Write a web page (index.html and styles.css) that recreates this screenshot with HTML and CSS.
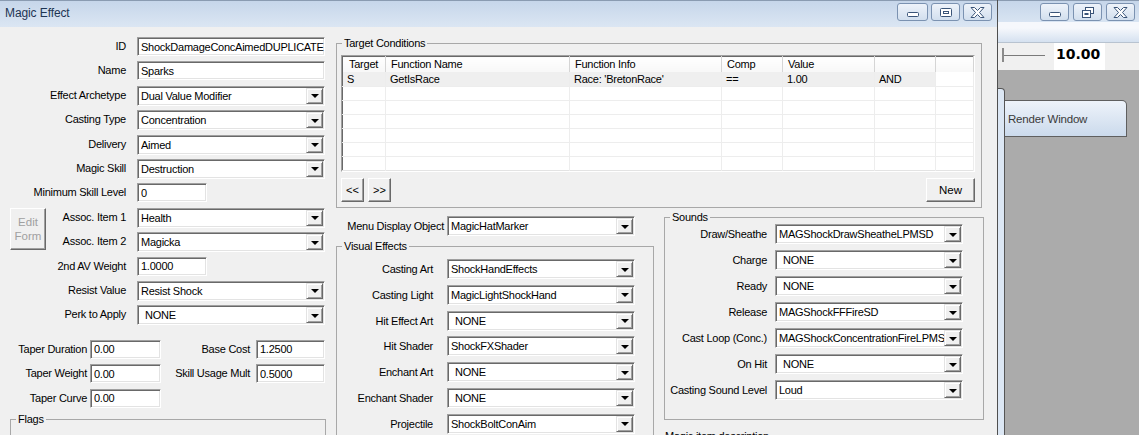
FILE: index.html
```html
<!DOCTYPE html>
<html lang="en">
<head>
<meta charset="UTF-8">
<title>Magic Effect</title>
<link rel="stylesheet" href="styles.css">
</head>
<body>
<div class="desktop">

<div class="dialog">
    <div class="titlebar">
        <span class="title">Magic Effect</span>
        <div class="caption-buttons">
            <span class="cap-btn wide glyph-low"><svg width="12" height="5" viewBox="0 0 12 5"><rect x="0.5" y="0.5" width="11" height="4" rx="1" fill="#fff" stroke="#3a5478"/></svg></span>
            <span class="cap-btn"><svg width="12" height="9" viewBox="0 0 12 9"><rect x="0.5" y="0.5" width="11" height="8" rx="1" fill="#fff" stroke="#3a5478"/><rect x="3.5" y="3.5" width="5" height="2" fill="#fff" stroke="#3a5478"/></svg></span>
            <span class="cap-btn"><svg width="15" height="11" viewBox="0 0 15 11"><polygon points="1,0.5 4.5,0.5 7.5,3.5 10.5,0.5 14,0.5 9.5,5.5 14,10.5 10.5,10.5 7.5,7.5 4.5,10.5 1,10.5 5.5,5.5" fill="#fff" stroke="#3a5478" stroke-linejoin="round"/></svg></span>
        </div>
    </div>

    <div class="dialog-body">
        <div class="left-col">
            <div class="form-grid">
                <span class="lbl">ID</span>
                <input class="edit wide" type="text" value="ShockDamageConcAimedDUPLICATE">
                <span class="lbl">Name</span>
                <input class="edit wide" type="text" value="Sparks">
                <span class="lbl">Effect Archetype</span>
                <div class="combo"><span class="combo-text">Dual Value Modifier</span><span class="combo-btn"></span></div>
                <span class="lbl">Casting Type</span>
                <div class="combo"><span class="combo-text">Concentration</span><span class="combo-btn"></span></div>
                <span class="lbl">Delivery</span>
                <div class="combo"><span class="combo-text">Aimed</span><span class="combo-btn"></span></div>
                <span class="lbl">Magic Skill</span>
                <div class="combo"><span class="combo-text">Destruction</span><span class="combo-btn"></span></div>
                <span class="lbl">Minimum Skill Level</span>
                <input class="edit short" type="text" value="0">
                <button class="edit-form" disabled>Edit<br>Form</button>
                <span class="lbl narrow">Assoc. Item 1</span>
                <div class="combo"><span class="combo-text">Health</span><span class="combo-btn"></span></div>
                <span class="lbl narrow">Assoc. Item 2</span>
                <div class="combo"><span class="combo-text">Magicka</span><span class="combo-btn"></span></div>
                <span class="lbl">2nd AV Weight</span>
                <input class="edit short" type="text" value="1.0000">
                <span class="lbl">Resist Value</span>
                <div class="combo"><span class="combo-text">Resist Shock</span><span class="combo-btn"></span></div>
                <span class="lbl">Perk to Apply</span>
                <div class="combo"><span class="combo-text none">NONE</span><span class="combo-btn"></span></div>
            </div>

            <div class="taper-grid">
                <span class="lbl-a">Taper Duration</span>
                <input class="edit" type="text" value="0.00">
                <span class="lbl-b">Base Cost</span>
                <input class="edit" type="text" value="1.2500">
                <span class="lbl-a">Taper Weight</span>
                <input class="edit" type="text" value="0.00">
                <span class="lbl-b">Skill Usage Mult</span>
                <input class="edit" type="text" value="0.5000">
                <span class="lbl-a">Taper Curve</span>
                <input class="edit" type="text" value="0.00">
            </div>

            <fieldset class="group flags">
                <legend>Flags</legend>
            </fieldset>
        </div>

        <div class="right-col">
            <fieldset class="group target">
                <legend>Target Conditions</legend>
                <div class="target-inner">
                    <div class="listview">
                        <table>
                            <colgroup>
                                <col style="width:43px"><col style="width:184px"><col style="width:152px"><col style="width:61px"><col style="width:92px"><col style="width:61px"><col>
                            </colgroup>
                            <tr><th class="first">Target</th><th>Function Name</th><th>Function Info</th><th>Comp</th><th>Value</th><th></th><th></th></tr>
                            <tr class="sel"><td>S</td><td>GetIsRace</td><td>Race: 'BretonRace'</td><td>==</td><td>1.00</td><td>AND</td><td class="blank"></td></tr>
                            <tr><td></td><td></td><td></td><td></td><td></td><td></td><td></td></tr>
                            <tr><td></td><td></td><td></td><td></td><td></td><td></td><td></td></tr>
                            <tr><td></td><td></td><td></td><td></td><td></td><td></td><td></td></tr>
                            <tr><td></td><td></td><td></td><td></td><td></td><td></td><td></td></tr>
                            <tr><td></td><td></td><td></td><td></td><td></td><td></td><td></td></tr>
                            <tr class="last"><td></td><td></td><td></td><td></td><td></td><td></td><td></td></tr>
                        </table>
                    </div>
                    <div class="list-buttons">
                        <div class="nav-buttons">
                            <button class="button small">&lt;&lt;</button>
                            <button class="button small">&gt;&gt;</button>
                        </div>
                        <button class="button new">New</button>
                    </div>
                </div>
            </fieldset>

            <div class="lower">
                <div class="lower-left">
                    <div class="menu-row">
                        <span class="lbl-menu">Menu Display Object</span>
                        <div class="combo"><span class="combo-text">MagicHatMarker</span><span class="combo-btn"></span></div>
                    </div>
                    <fieldset class="group visual">
                        <legend>Visual Effects</legend>
                        <div class="visual-grid">
                            <span class="lbl-v">Casting Art</span>
                            <div class="combo"><span class="combo-text">ShockHandEffects</span><span class="combo-btn"></span></div>
                            <span class="lbl-v">Casting Light</span>
                            <div class="combo"><span class="combo-text">MagicLightShockHand</span><span class="combo-btn"></span></div>
                            <span class="lbl-v">Hit Effect Art</span>
                            <div class="combo"><span class="combo-text none">NONE</span><span class="combo-btn"></span></div>
                            <span class="lbl-v">Hit Shader</span>
                            <div class="combo"><span class="combo-text">ShockFXShader</span><span class="combo-btn"></span></div>
                            <span class="lbl-v">Enchant Art</span>
                            <div class="combo"><span class="combo-text none">NONE</span><span class="combo-btn"></span></div>
                            <span class="lbl-v">Enchant Shader</span>
                            <div class="combo"><span class="combo-text none">NONE</span><span class="combo-btn"></span></div>
                            <span class="lbl-v">Projectile</span>
                            <div class="combo"><span class="combo-text">ShockBoltConAim</span><span class="combo-btn"></span></div>
                        </div>
                    </fieldset>
                </div>

                <div class="lower-right">
                    <fieldset class="group sounds">
                        <legend>Sounds</legend>
                        <div class="sounds-grid">
                            <span class="lbl-s">Draw/Sheathe</span>
                            <div class="combo"><span class="combo-text">MAGShockDrawSheatheLPMSD</span><span class="combo-btn"></span></div>
                            <span class="lbl-s">Charge</span>
                            <div class="combo"><span class="combo-text none">NONE</span><span class="combo-btn"></span></div>
                            <span class="lbl-s">Ready</span>
                            <div class="combo"><span class="combo-text none">NONE</span><span class="combo-btn"></span></div>
                            <span class="lbl-s">Release</span>
                            <div class="combo"><span class="combo-text">MAGShockFFFireSD</span><span class="combo-btn"></span></div>
                            <span class="lbl-s">Cast Loop (Conc.)</span>
                            <div class="combo"><span class="combo-text">MAGShockConcentrationFireLPMSD</span><span class="combo-btn"></span></div>
                            <span class="lbl-s">On Hit</span>
                            <div class="combo"><span class="combo-text none">NONE</span><span class="combo-btn"></span></div>
                            <span class="lbl-s">Casting Sound Level</span>
                            <div class="combo"><span class="combo-text">Loud</span><span class="combo-btn"></span></div>
                        </div>
                    </fieldset>
                    <div class="description">Magic item description</div>
                </div>
            </div>
        </div>
    </div>
</div>

<div class="bg-window">
    <div class="bg-titlebar">
        <span class="cap-btn glyph-low"><svg width="12" height="5" viewBox="0 0 12 5"><rect x="0.5" y="0.5" width="11" height="4" rx="1" fill="#fff" stroke="#3a5478"/></svg></span>
        <span class="cap-btn"><svg width="12" height="11" viewBox="0 0 12 11"><rect x="3.5" y="0.5" width="8" height="6" fill="#fff" stroke="#3a5478"/><rect x="0.5" y="3.5" width="8" height="7" fill="#fff" stroke="#3a5478"/><rect x="2.5" y="6" width="4" height="2" fill="#3a5478"/></svg></span>
        <span class="cap-btn"><svg width="15" height="11" viewBox="0 0 15 11"><polygon points="1,0.5 4.5,0.5 7.5,3.5 10.5,0.5 14,0.5 9.5,5.5 14,10.5 10.5,10.5 7.5,7.5 4.5,10.5 1,10.5 5.5,5.5" fill="#fff" stroke="#3a5478" stroke-linejoin="round"/></svg></span>
    </div>
    <div class="bg-toolbar"></div>
    <div class="bg-slider-row">
        <div class="slider"></div>
        <div class="slider-value">10.00</div>
    </div>
    <div class="bg-area">
        <div class="tab-strip"></div>
        <div class="render-tab">Render Window</div>
    </div>
</div>

</div>
</body>
</html>
```

FILE: styles.css
```css
* {
    box-sizing: border-box;
}
body {
    margin: 0;
    width: 1139px;
    height: 435px;
    overflow: hidden;
    font-family: "Liberation Sans", Arial, sans-serif;
    font-size: 11px;
    letter-spacing: -0.25px;
    color: #000;
    background: #ababab;
}
.desktop {
    display: flex;
    height: 435px;
}

/* dialog window */
.dialog {
    width: 998px;
    flex: none;
    display: flex;
    flex-direction: column;
    background: #f0f0f0;
    border-right: 1px solid #4f4f4f;
}
.titlebar {
    height: 27px;
    flex: none;
    display: flex;
    justify-content: space-between;
    padding: 0 5px;
    background: linear-gradient(#c6d6ea, #dbe6f3);
    border-top: 1px solid #8a9bb1;
}
.title {
    line-height: 25px;
    font-size: 12px;
    letter-spacing: -0.1px;
    color: #1e3553;
}
.caption-buttons {
    display: flex;
    gap: 3px;
    padding-top: 2px;
}
.cap-btn {
    width: 29px;
    height: 18px;
    display: flex;
    align-items: center;
    justify-content: center;
    border: 1px solid #7b92b1;
    border-radius: 3px;
    background: linear-gradient(#eef3fa, #d2dfee);
}
.cap-btn.wide {
    width: 31px;
}
.cap-btn.glyph-low {
    align-items: flex-end;
    padding-bottom: 3px;
}
.dialog-body {
    flex: 1;
    min-height: 0;
    display: flex;
    overflow: hidden;
}

/* left column */
.left-col {
    width: 336px;
    flex: none;
    padding: 10px 0 0 10px;
}
.form-grid {
    display: grid;
    grid-template-columns: 36px 91px 188px;
    grid-auto-rows: 24.4px;
    align-items: start;
}
.lbl {
    grid-column: 1 / 3;
    text-align: right;
    padding-right: 11px;
    line-height: 19px;
    white-space: nowrap;
}
.lbl.narrow {
    grid-column: 2;
}
.form-grid .edit, .form-grid .combo {
    grid-column: 3;
}
.edit-form {
    grid-column: 1;
    grid-row: 8 / 10;
    height: 42px;
    padding: 0;
    font: inherit;
    font-size: 11.5px;
    line-height: 14px;
    color: #a0a0a0;
    background: #f0f0f0;
    border: 1px solid;
    border-color: #fff #696969 #696969 #fff;
    box-shadow: inset -1px -1px 0 #a0a0a0;
}
.taper-grid {
    display: grid;
    grid-template-columns: 80px 71px 95px 69px;
    grid-auto-rows: 24.5px;
    align-items: start;
    margin-top: 10px;
}
.lbl-a, .lbl-b {
    text-align: right;
    line-height: 19px;
    white-space: nowrap;
    padding-right: 3px;
}
.lbl-b {
    padding-right: 6px;
}
.flags {
    width: 316px;
    height: 60px;
    margin-top: 4px;
}

/* edit boxes and combo boxes */
.edit {
    height: 19px;
    width: 100%;
    padding: 0 0 0 3px;
    font: inherit;
    letter-spacing: inherit;
    color: #000;
    background: #fff;
    border: 1px solid;
    border-color: #a0a0a0 #fff #fff #a0a0a0;
    box-shadow: inset 1px 1px 0 #696969, inset -1px -1px 0 #e3e3e3;
    outline: none;
}
.edit.short {
    width: 70px;
}
.combo {
    width: 188px;
    height: 20px;
    display: flex;
    align-items: center;
    padding: 1px 1px 1px 3px;
    background: #fff;
    border: 1px solid;
    border-color: #a0a0a0 #fff #fff #a0a0a0;
    box-shadow: inset 1px 1px 0 #696969, inset -1px -1px 0 #e3e3e3;
}
.combo-text {
    flex: 1;
    overflow: hidden;
    white-space: nowrap;
}
.combo-text.none {
    padding-left: 4px;
}
.combo-btn {
    width: 17px;
    height: 16px;
    flex: none;
    display: flex;
    align-items: center;
    justify-content: center;
    background: #f0f0f0;
    border: 1px solid;
    border-color: #e3e3e3 #696969 #696969 #e3e3e3;
    box-shadow: inset 1px 1px 0 #fff, inset -1px -1px 0 #a0a0a0;
}
.combo-btn::after {
    content: "";
    width: 0;
    height: 0;
    border-left: 4px solid transparent;
    border-right: 4px solid transparent;
    border-top: 4px solid #000;
    margin-top: 1px;
}

/* group boxes */
.group {
    margin: 0;
    padding: 0;
    min-width: 0;
    border: 1px solid #a8a8a8;
}
.group legend {
    margin-left: 5px;
    padding: 0 2px;
    line-height: 13px;
}

/* right part */
.right-col {
    width: 650px;
    flex: none;
}
.target {
    width: 646px;
    margin-top: 10px;
}
.target-inner {
    padding: 5px 6px 5px 4px;
}
.listview {
    border: 1px solid;
    border-color: #a0a0a0 #fff #fff #a0a0a0;
    background: #fff;
}
.listview table {
    width: 632px;
    table-layout: fixed;
    border-collapse: collapse;
    border: 1px solid;
    border-color: #696969 #e3e3e3 #e3e3e3 #696969;
}
.listview th {
    height: 15px;
    padding: 0 0 0 5px;
    font-weight: normal;
    text-align: left;
    white-space: nowrap;
    background: linear-gradient(#fff, #f7f7f7);
    border-right: 1px solid #d5d5d5;
}
.listview th.first {
    padding-left: 6px;
}
.listview td {
    height: 14px;
    padding: 0 0 0 4px;
    white-space: nowrap;
    overflow: hidden;
    border-right: 1px solid #ededed;
    border-bottom: 1px solid #ededed;
}
.listview tr.sel td {
    height: 15px;
    background: #efefef;
}
.listview tr.sel td.blank {
    background: #fff;
}
.listview tr.last td {
    border-bottom: none;
}
.list-buttons {
    display: flex;
    justify-content: space-between;
    margin-top: 6px;
}
.nav-buttons {
    display: flex;
    gap: 4px;
}
.button {
    height: 24px;
    padding: 0;
    font: inherit;
    color: #000;
    background: #f0f0f0;
    border: 1px solid;
    border-color: #fff #696969 #696969 #fff;
    box-shadow: inset -1px -1px 0 #a0a0a0;
}
.button.small {
    width: 23px;
}
.button.new {
    width: 49px;
    font-size: 11.5px;
}
.lower {
    display: flex;
    gap: 10px;
    align-items: flex-start;
}
.lower-left {
    width: 318px;
    flex: none;
    padding-top: 8px;
}
.menu-row {
    display: grid;
    grid-template-columns: 111px 188px;
    align-items: center;
}
.lbl-menu {
    text-align: right;
    padding-right: 3px;
    white-space: nowrap;
}
.visual {
    height: 200px;
    margin-top: 4px;
}
.visual-grid, .sounds-grid {
    display: grid;
    grid-template-columns: 110px 188px;
    align-items: center;
}
.visual-grid {
    grid-auto-rows: 25.8px;
    padding-top: 6px;
    align-items: start;
}
.lbl-v, .lbl-s {
    text-align: right;
    line-height: 20px;
    white-space: nowrap;
    padding-right: 14px;
}
.lower-right {
    width: 320px;
    flex: none;
    padding-top: 3px;
}
.sounds-grid {
    grid-auto-rows: 26px;
    align-items: start;
    padding-bottom: 13px;
}
.lbl-s {
    padding-right: 8px;
}
.description {
    margin-top: 10px;
    padding-left: 1px;
}

/* window behind the dialog */
.bg-window {
    flex: 1;
    display: flex;
    flex-direction: column;
    min-width: 0;
}
.bg-titlebar {
    height: 22px;
    flex: none;
    display: flex;
    justify-content: flex-end;
    gap: 4px;
    padding: 2px 4px 0 0;
    background: linear-gradient(#c6d6ea, #d8e4f2);
    border-top: 1px solid #8a9bb1;
}
.bg-toolbar {
    height: 21px;
    flex: none;
    background: linear-gradient(#f6f8fc 30%, #d5e1f0);
    border-bottom: 1px solid #b8c3d0;
}
.bg-slider-row {
    height: 27px;
    flex: none;
    display: flex;
    align-items: stretch;
    background: #f0f0f0;
}
.slider {
    width: 43px;
    height: 14px;
    margin: 5px 0 0 4px;
    border-left: 2px solid #8a8a8a;
    background: linear-gradient(#7a7a7a, #7a7a7a) center / 100% 1px no-repeat;
}
.slider-value {
    width: 51px;
    margin-left: 9px;
    padding: 3px 0 0 2px;
    background: #fff;
    font-family: "DejaVu Sans", Verdana, sans-serif;
    font-weight: bold;
    font-size: 14px;
    letter-spacing: 0;
}
.bg-area {
    flex: 1;
    min-height: 0;
    overflow: hidden;
    display: flex;
    align-items: flex-start;
    padding-top: 18px;
    background: #ababab;
}
.tab-strip {
    width: 7px;
    height: 360px;
    flex: none;
    background: #dce7f4;
    border: 1px solid #555;
    border-left: none;
    border-top-right-radius: 4px;
}
.render-tab {
    width: 122px;
    height: 37px;
    flex: none;
    margin-top: 12px;
    padding-left: 3px;
    line-height: 36px;
    font-size: 11.5px;
    letter-spacing: -0.2px;
    color: #3a3a3a;
    background: linear-gradient(#eef3fa, #cbdaec);
    border: 1px solid #5f5f5f;
    border-left: none;
    border-top-right-radius: 5px;
}
```
